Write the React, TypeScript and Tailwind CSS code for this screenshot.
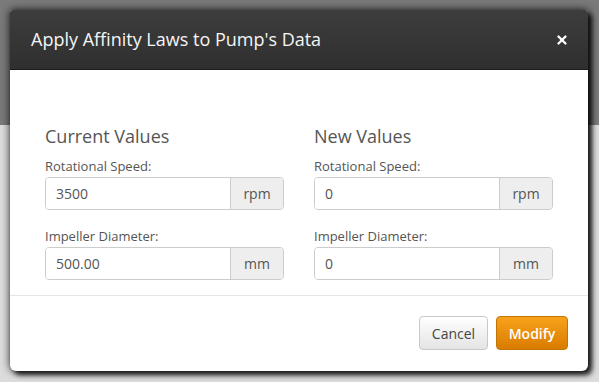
import { X } from "lucide-react";

function InputAddon({ value, unit }: { value: string; unit: string }) {
  return (
    <div className="flex h-[33px] rounded-[4px] border border-[#cccccc] overflow-hidden">
      <div className="flex-1 flex items-center pl-[10px] text-[14px] text-[#555555] bg-white">{value}</div>
      <div className="w-[53px] flex items-center justify-center border-l border-[#cccccc] bg-[#eeeeee] text-[14px] text-[#555555]">
        {unit}
      </div>
    </div>
  );
}

function Column({ title, speed, diameter }: { title: string; speed: string; diameter: string }) {
  return (
    <div className="flex flex-col">
      <h3 className="text-[18px] leading-[22px] text-[#555555]">{title}</h3>
      <label className="mt-[10px] text-[13px] leading-[18px] text-[#555555]">Rotational Speed:</label>
      <div className="mt-[2px]">
        <InputAddon value={speed} unit="rpm" />
      </div>
      <label className="mt-[17px] text-[13px] leading-[18px] text-[#555555]">Impeller Diameter:</label>
      <div className="mt-[2px]">
        <InputAddon value={diameter} unit="mm" />
      </div>
    </div>
  );
}

export default function App() {
  return (
    <div className="relative w-[599px] h-[382px] overflow-hidden font-['Open_Sans',sans-serif]">
      {/* page behind the dialog */}
      <div className="flex flex-col h-full">
        <div className="h-[125px] bg-[#7a7a7a]" />
        <div className="flex-1 bg-[#dcdcdc]" />
      </div>

      <div className="absolute left-[10px] top-[10px] w-[578px] h-[361px] flex flex-col bg-white rounded-t-[3px] rounded-b-[6px] shadow-[0_0_9px_rgba(0,0,0,0.85),4px_4px_5px_rgba(0,0,0,0.8)]">
        <div className="h-[60px] flex items-center justify-between pl-[21px] pr-[19px] rounded-t-[3px] bg-gradient-to-b from-[#3d3d3d] to-[#2f2f2f] border-b border-[#1c1c1c]">
          <h2 className="text-[18px] text-[#f5f5f5]">Apply Affinity Laws to Pump's Data</h2>
          <X size={14} strokeWidth={4} className="text-white" />
        </div>

        <div className="grid grid-cols-2 gap-[30px] px-[35px] pt-[55px] pb-[15px] border-b border-[#e5e5e5]">
          <Column title="Current Values" speed="3500" diameter="500.00" />
          <Column title="New Values" speed="0" diameter="0" />
        </div>

        <div className="flex justify-end gap-[8px] p-[20px]">
          <button className="w-[69px] h-[34px] rounded-[4px] border border-[#c8c8c8] bg-gradient-to-b from-white to-[#e4e4e4] text-[14px] text-[#444444]">
            Cancel
          </button>
          <button className="w-[72px] h-[34px] rounded-[4px] border border-[#c27506] bg-gradient-to-b from-[#f8a21a] to-[#d97c00] text-[14px] font-semibold text-white">
            Modify
          </button>
        </div>
      </div>
    </div>
  );
}
